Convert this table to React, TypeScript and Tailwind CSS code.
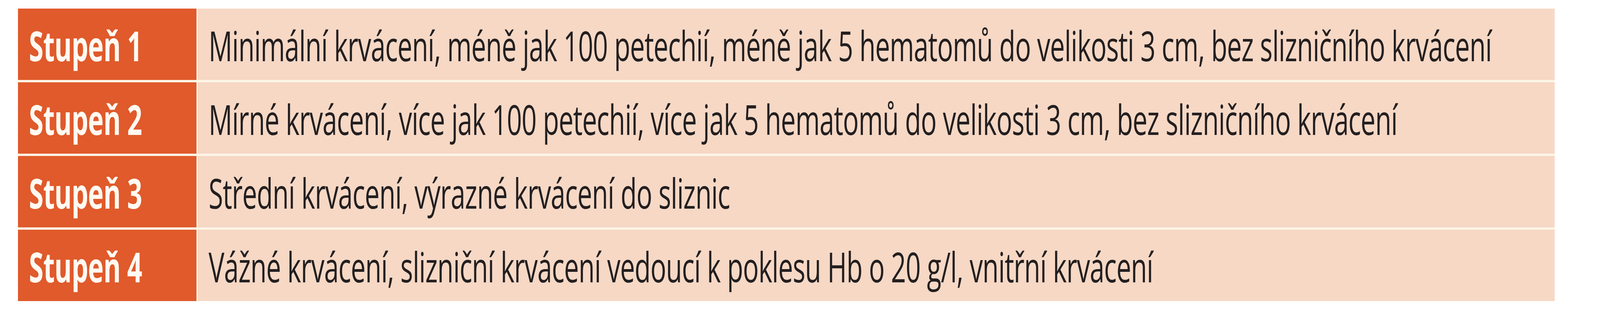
import React, { useEffect, useState } from "react";

const rows = [
  {
    label: "Stupeň 1",
    text: "Minimální krvácení, méně jak 100 petechií, méně jak 5 hematomů do velikosti 3 cm, bez slizničního krvácení",
  },
  {
    label: "Stupeň 2",
    text: "Mírné krvácení, více jak 100 petechií, více jak 5 hematomů do velikosti 3 cm, bez slizničního krvácení",
  },
  {
    label: "Stupeň 3",
    text: "Střední krvácení, výrazné krvácení do sliznic",
  },
  {
    label: "Stupeň 4",
    text: "Vážné krvácení, slizniční krvácení vedoucí k poklesu Hb o 20 g/l, vnitřní krvácení",
  },
];

function useScale() {
  const get = () =>
    typeof window === "undefined" ? 1 : Math.min(1, window.innerWidth / 6417);
  const [s, setS] = useState(get);
  useEffect(() => {
    const on = () => setS(get());
    on();
    window.addEventListener("resize", on);
    return () => window.removeEventListener("resize", on);
  }, []);
  return s;
}

export default function App() {
  const s = useScale();
  const tf = { transform: `scaleX(${s})` };
  return (
    <div className="w-full h-[800px] overflow-hidden bg-white pt-[22px] pl-[1.122vw] font-['Open_Sans',sans-serif]">
      <div className="w-[96.04vw] flex flex-col gap-[6px] bg-[#fdf5e6]">
        {rows.map((r) => (
          <div key={r.label} className="flex h-[183px] gap-[0.078vw]">
            <div className="w-[11.158vw] shrink-0 min-w-0 bg-[#e05a2b] flex items-center pl-[0.686vw] pt-[6px]">
              <span
                className="inline-block origin-left text-[106px] leading-[1.362] font-bold text-[#fffaf2] tracking-[-1px] whitespace-nowrap"
                style={tf}
              >
                {r.label}
              </span>
            </div>
            <div className="flex-1 min-w-0 bg-[#f6d8c5] flex items-center pl-[0.67vw] pt-[6px]">
              <span
                className="inline-block origin-left text-[106px] leading-[1.362] text-[#231f20] tracking-[-1.4px] whitespace-nowrap"
                style={tf}
              >
                {r.text}
              </span>
            </div>
          </div>
        ))}
      </div>
    </div>
  );
}
